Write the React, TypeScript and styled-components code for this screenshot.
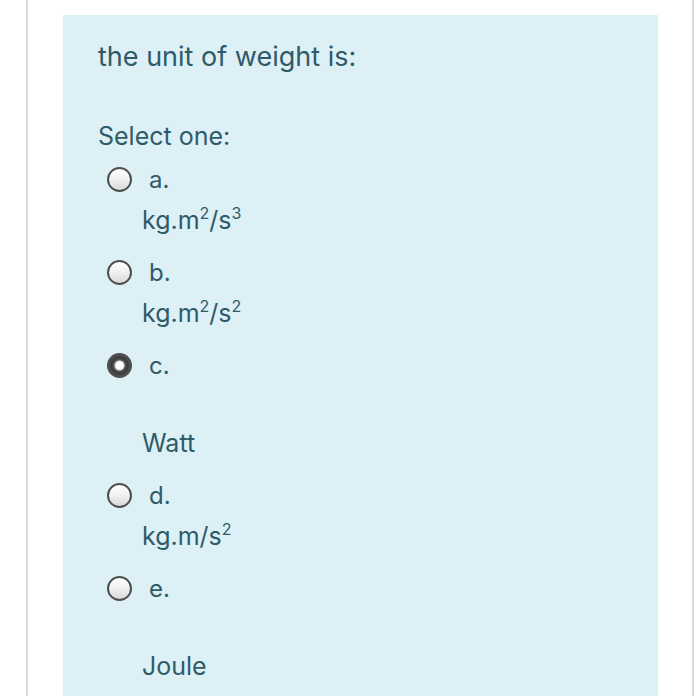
import React from "react";
import styled, { createGlobalStyle } from "styled-components";

const Global = createGlobalStyle`
  html, body { margin: 0; padding: 0; background: #ffffff; }
  body { font-family: Inter, "Liberation Sans", Arial, sans-serif; }
`;

const Frame = styled.div`
  box-sizing: border-box;
  margin-left: 26px;
  width: 668px;
  height: 696px;
  border-left: 2px solid #d9d9d9;
  border-right: 2px solid #d9d9d9;
  padding: 15px 34px 0 35px;
  overflow: hidden;
`;

const Panel = styled.section`
  background: #dcf0f6;
  min-height: 681px;
  padding: 25px 35px 0 35px;
  color: #2f5b69;
  display: flex;
  flex-direction: column;
`;

const Question = styled.h1`
  margin: 0;
  font-size: 27px;
  line-height: 34px;
  font-weight: 400;
`;

const Prompt = styled.div`
  margin-top: 46px;
  font-size: 25px;
  line-height: 32px;
`;

const Options = styled.div`
  margin-top: 13px;
  display: flex;
  flex-direction: column;
  gap: 23px;
`;

const Option = styled.label`
  display: flex;
  flex-direction: column;
`;

const Head = styled.div`
  display: flex;
  align-items: center;
  gap: 17px;
  padding-left: 9px;
  height: 30px;
`;

const Radio = styled.span<{ $checked?: boolean }>`
  box-sizing: border-box;
  width: 25px;
  height: 25px;
  margin-top: -2px;
  border-radius: 50%;
  border: 2px solid #4e4e4e;
  background: ${(p) =>
    p.$checked
      ? "radial-gradient(circle at 50% 50%, #ffffff 0 3.5px, #d8d8d8 4.5px, #5a5a5a 5.5px, #3a3a3a 8px, #555 11px)"
      : "linear-gradient(180deg, #ffffff 0%, #f2f2f2 45%, #d9d9d9 100%)"};
`;

const Letter = styled.span`
  font-size: 24px;
  line-height: 30px;
`;

const Answer = styled.div<{ $spaced?: boolean }>`
  margin-top: ${(p) => (p.$spaced ? "47px" : "10px")};
  padding-left: 44px;
  font-size: 25px;
  line-height: 30px;
  sup {
    font-size: 16px;
    line-height: 0;
    vertical-align: 10px;
  }
`;

type Opt = { letter: string; answer: React.ReactNode; spaced?: boolean; checked?: boolean };

const opts: Opt[] = [
  { letter: "a.", answer: <>kg.m<sup>2</sup>/s<sup>3</sup></> },
  { letter: "b.", answer: <>kg.m<sup>2</sup>/s<sup>2</sup></> },
  { letter: "c.", answer: "Watt", spaced: true, checked: true },
  { letter: "d.", answer: <>kg.m/s<sup>2</sup></> },
  { letter: "e.", answer: "Joule", spaced: true },
];

export default function App() {
  return (
    <>
      <Global />
      <Frame>
        <Panel>
          <Question>the unit of weight is:</Question>
          <Prompt>Select one:</Prompt>
          <Options>
            {opts.map((o) => (
              <Option key={o.letter}>
                <Head>
                  <Radio $checked={o.checked} />
                  <Letter>{o.letter}</Letter>
                </Head>
                <Answer $spaced={o.spaced}>{o.answer}</Answer>
              </Option>
            ))}
          </Options>
        </Panel>
      </Frame>
    </>
  );
}
